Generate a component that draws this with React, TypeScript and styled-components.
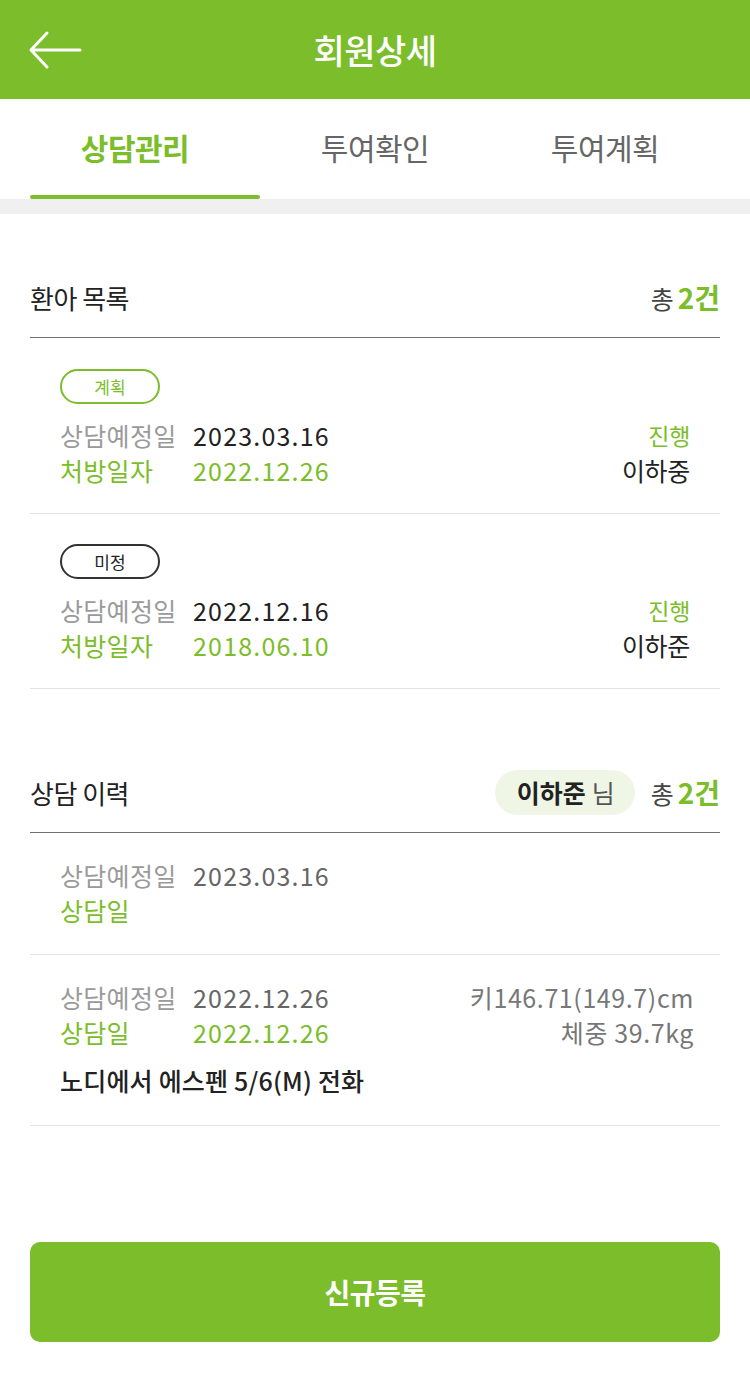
import React from "react";
import styled, { createGlobalStyle } from "styled-components";

const GREEN = "#7bbd2a";

const Global = createGlobalStyle`
  * { box-sizing: border-box; }
  html, body { margin: 0; padding: 0; background: #fff; }
  body { font-family: "Noto Sans CJK KR", "Noto Sans", sans-serif; color: #222; }
`;

const Page = styled.div`
  width: 750px;
  min-height: 1392px;
  display: flex;
  flex-direction: column;
  background: #fff;
`;

const Header = styled.header`
  height: 99px;
  background: ${GREEN};
  display: flex;
  align-items: center;
  justify-content: center;
  position: relative;
`;

const BackButton = styled.button`
  position: absolute;
  left: 28px;
  top: 30px;
  width: 56px;
  height: 40px;
  border: 0;
  padding: 0;
  background: transparent;
  display: flex;
  align-items: center;
`;

const Title = styled.h1`
  margin: 0;
  color: #fff;
  font-size: 34px;
  font-weight: 500;
  letter-spacing: -0.5px;
`;

const Tabs = styled.nav`
  display: grid;
  grid-template-columns: repeat(3, 1fr);
  padding: 0 30px;
  height: 100px;
  border-bottom: 15px solid #f0f0f0;
  box-sizing: content-box;
`;

const Tab = styled.div<{ $active?: boolean }>`
  display: flex;
  align-items: center;
  justify-content: center;
  font-size: 30px;
  font-weight: ${(p) => (p.$active ? 700 : 400)};
  color: ${(p) => (p.$active ? GREEN : "#666")};
  position: relative;
  padding-bottom: 4px;
  letter-spacing: -0.5px;
  &:first-child {
    padding-right: 20px;
  }
  &::after {
    content: "";
    display: ${(p) => (p.$active ? "block" : "none")};
    position: absolute;
    left: 0;
    right: 0;
    bottom: 0;
    height: 4px;
    border-radius: 2px;
    background: ${GREEN};
  }
`;

const Section = styled.section<{ $top: number }>`
  margin-top: ${(p) => p.$top}px;
  padding: 0 30px;
`;

const SectionHead = styled.div`
  display: flex;
  align-items: center;
  height: 50px;
  margin-bottom: 16px;
  position: relative;
  &::after {
    content: "";
    position: absolute;
    left: 0;
    right: 0;
    bottom: -16px;
    height: 1px;
    background: #707070;
  }
`;

const SectionTitle = styled.h2`
  margin: 0;
  flex: 1;
  font-size: 26px;
  font-weight: 400;
  color: #222;
  letter-spacing: -0.5px;
`;

const Pill = styled.span`
  height: 45px;
  padding: 0 20px 0 22px;
  border-radius: 23px;
  background: #eff6e6;
  display: flex;
  align-items: center;
  font-size: 25px;
  color: #555;
  margin-right: 16px;
  b {
    font-weight: 700;
    color: #222;
    margin-right: 6px;
  }
`;

const Count = styled.span`
  font-size: 25px;
  color: #444;
  b {
    font-size: 28px;
    font-weight: 700;
    color: ${GREEN};
    margin-left: 4px;
  }
`;

const List = styled.div`
  display: flex;
  flex-direction: column;
  padding-top: 1px;
`;

const Item = styled.div<{ $pt: number; $pb: number }>`
  padding: ${(p) => p.$pt}px 30px ${(p) => p.$pb}px 30px;
  border-bottom: 1px solid #e3e3e3;
`;

const Badge = styled.span<{ $green?: boolean }>`
  display: flex;
  align-items: center;
  justify-content: center;
  width: 100px;
  height: 35px;
  border-radius: 18px;
  border: 2px solid ${(p) => (p.$green ? GREEN : "#333")};
  color: ${(p) => (p.$green ? GREEN : "#222")};
  font-size: 17px;
  margin-bottom: 13px;
`;

const Row = styled.div`
  display: flex;
  align-items: center;
  height: 35px;
`;

const Label = styled.span<{ $green?: boolean }>`
  width: 133px;
  font-size: 25px;
  color: ${(p) => (p.$green ? GREEN : "#9a9a9a")};
  letter-spacing: 0.3px;
`;

const Value = styled.span<{ $tone: "dark" | "green" | "gray" }>`
  flex: 1;
  font-size: 25px;
  letter-spacing: 1.2px;
  color: ${(p) => (p.$tone === "green" ? GREEN : p.$tone === "gray" ? "#666" : "#222")};
`;

const Side = styled.span<{ $tone: "green" | "dark" | "gray"; $size: number; $out?: boolean }>`
  font-size: ${(p) => p.$size}px;
  color: ${(p) => (p.$tone === "green" ? GREEN : p.$tone === "gray" ? "#777" : "#222")};
  letter-spacing: ${(p) => (p.$out ? "0.6px" : "-0.3px")};
  margin-right: ${(p) => (p.$out ? "-4px" : "0")};
`;

const Note = styled.div`
  margin-top: 14px;
  font-size: 25px;
  font-weight: 500;
  color: #222;
  line-height: 35px;
  letter-spacing: 0.2px;
`;

const Footer = styled.div`
  margin-top: 116px;
  padding: 0 30px 50px;
`;

const PrimaryButton = styled.button`
  width: 100%;
  height: 100px;
  border: 0;
  border-radius: 10px;
  background: ${GREEN};
  color: #fff;
  font-family: inherit;
  font-size: 28px;
  font-weight: 700;
  letter-spacing: -0.5px;
`;

const BackArrow = () => (
  <svg width="54" height="40" viewBox="0 0 54 40" fill="none">
    <path d="M3 20 H52 M19 3 L3 20 L19 37" stroke="#fff" strokeWidth="3" strokeLinecap="round" strokeLinejoin="round" />
  </svg>
);

const patients = [
  { badge: "계획", green: true, plan: "2023.03.16", rx: "2022.12.26", status: "진행", name: "이하중" },
  { badge: "미정", green: false, plan: "2022.12.16", rx: "2018.06.10", status: "진행", name: "이하준" },
];

export default function App() {
  return (
    <Page>
      <Global />
      <Header>
        <BackButton aria-label="뒤로">
          <BackArrow />
        </BackButton>
        <Title>회원상세</Title>
      </Header>
      <Tabs>
        <Tab $active>상담관리</Tab>
        <Tab>투여확인</Tab>
        <Tab>투여계획</Tab>
      </Tabs>

      <Section $top={58}>
        <SectionHead>
          <SectionTitle>환아 목록</SectionTitle>
          <Count>
            총<b>2건</b>
          </Count>
        </SectionHead>
        <List>
          {patients.map((p) => (
            <Item key={p.name} $pt={30} $pb={26}>
              <Badge $green={p.green}>{p.badge}</Badge>
              <Row>
                <Label>상담예정일</Label>
                <Value $tone="dark">{p.plan}</Value>
                <Side $tone="green" $size={23}>{p.status}</Side>
              </Row>
              <Row>
                <Label $green>처방일자</Label>
                <Value $tone="green">{p.rx}</Value>
                <Side $tone="dark" $size={25}>{p.name}</Side>
              </Row>
            </Item>
          ))}
        </List>
      </Section>

      <Section $top={78}>
        <SectionHead>
          <SectionTitle>상담 이력</SectionTitle>
          <Pill>
            <b>이하준</b>님
          </Pill>
          <Count>
            총<b>2건</b>
          </Count>
        </SectionHead>
        <List>
          <Item $pt={23} $pb={27}>
            <Row>
              <Label>상담예정일</Label>
              <Value $tone="gray">2023.03.16</Value>
            </Row>
            <Row>
              <Label $green>상담일</Label>
              <Value $tone="green"></Value>
            </Row>
          </Item>
          <Item $pt={24} $pb={27}>
            <Row>
              <Label>상담예정일</Label>
              <Value $tone="gray">2022.12.26</Value>
              <Side $tone="gray" $size={25} $out>키146.71(149.7)cm</Side>
            </Row>
            <Row>
              <Label $green>상담일</Label>
              <Value $tone="green">2022.12.26</Value>
              <Side $tone="gray" $size={25} $out>체중 39.7kg</Side>
            </Row>
            <Note>노디에서 에스펜 5/6(M) 전화</Note>
          </Item>
        </List>
      </Section>

      <Footer>
        <PrimaryButton>신규등록</PrimaryButton>
      </Footer>
    </Page>
  );
}
